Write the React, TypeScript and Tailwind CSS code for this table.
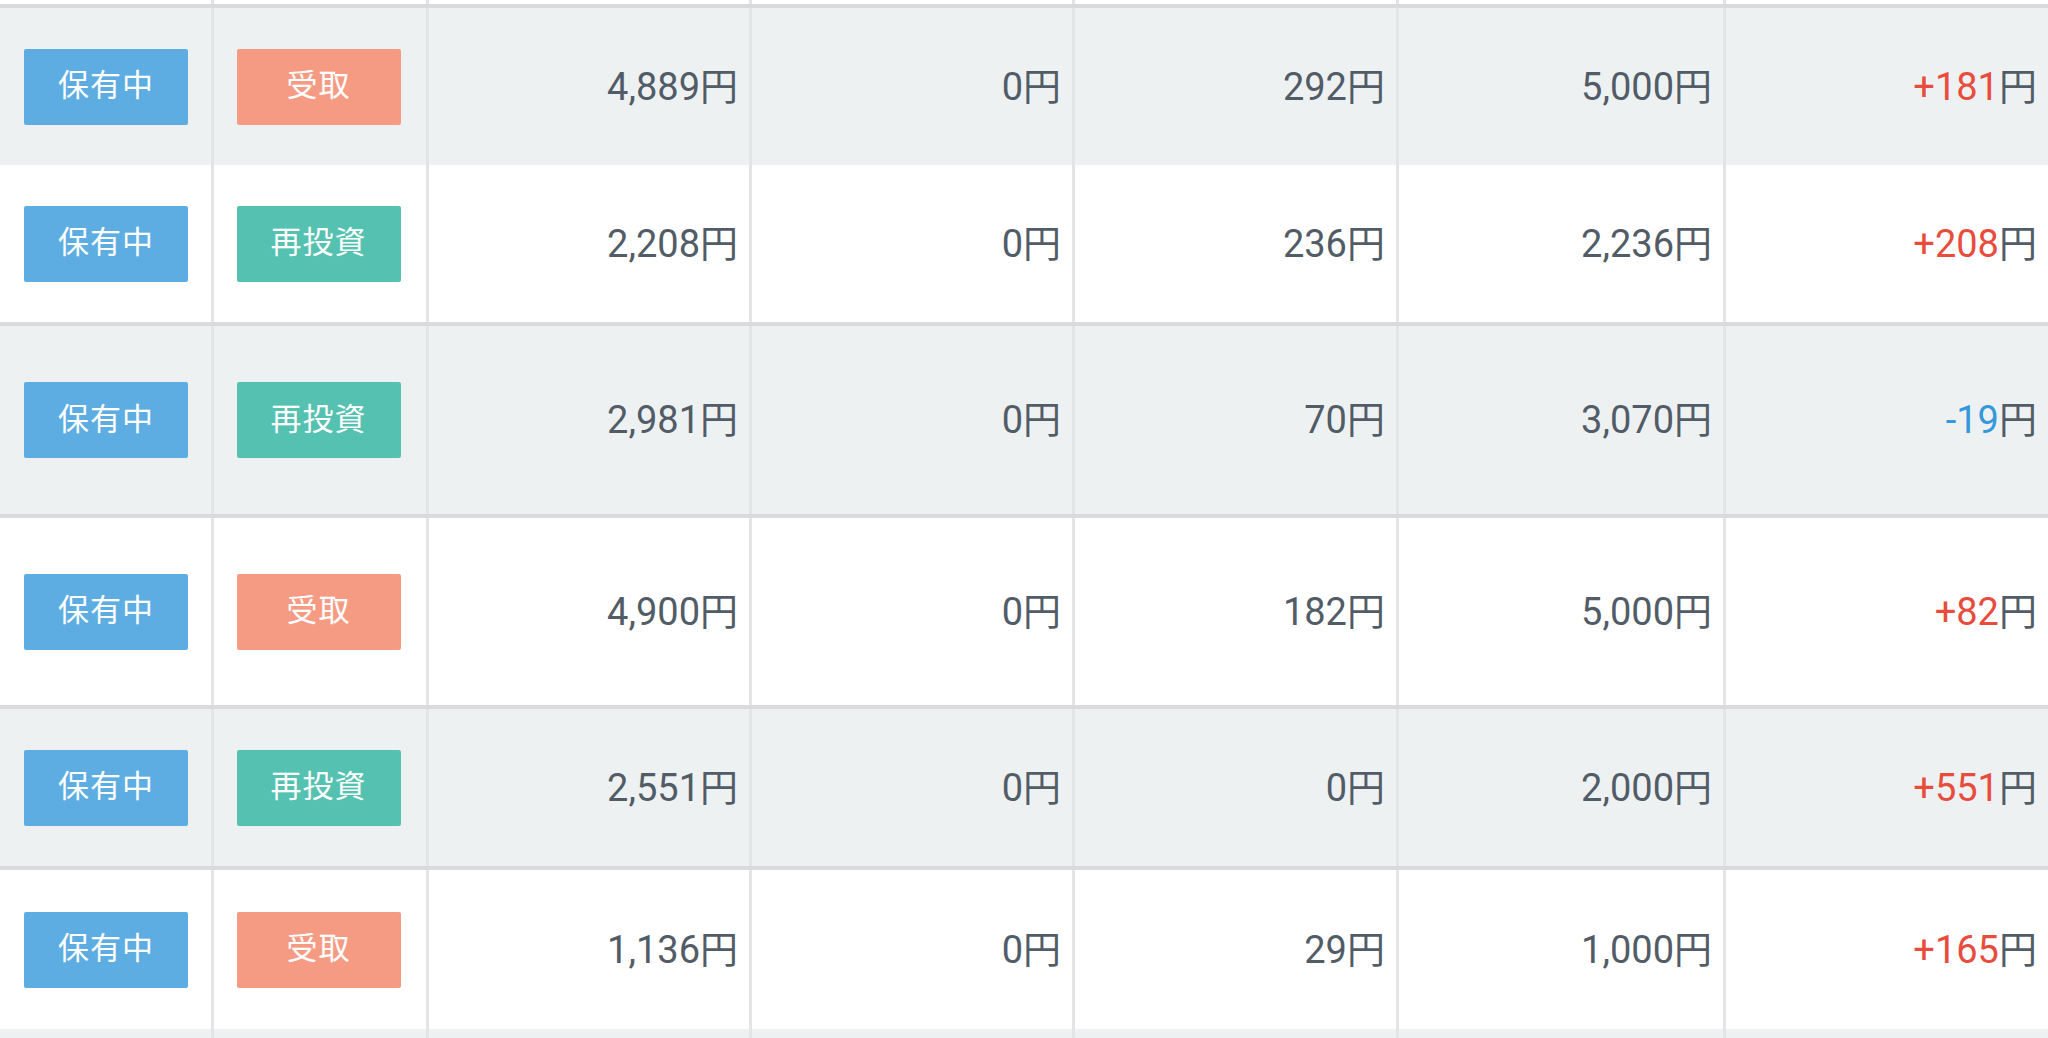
import React from 'react';

type Row = {
  action: 'receive' | 'reinvest';
  values: string[];
  profit: string;
  grey: boolean;
  border: boolean;
  height: string;
};

const rows: Row[] = [
  { action: 'receive', values: ['4,889', '0', '292', '5,000'], profit: '+181', grey: true, border: true, height: 'h-[157px]' },
  { action: 'reinvest', values: ['2,208', '0', '236', '2,236'], profit: '+208', grey: false, border: false, height: 'h-[157px]' },
  { action: 'reinvest', values: ['2,981', '0', '70', '3,070'], profit: '-19', grey: true, border: true, height: 'h-[188px]' },
  { action: 'receive', values: ['4,900', '0', '182', '5,000'], profit: '+82', grey: false, border: true, height: 'h-[187px]' },
  { action: 'reinvest', values: ['2,551', '0', '0', '2,000'], profit: '+551', grey: true, border: true, height: 'h-[157px]' },
  { action: 'receive', values: ['1,136', '0', '29', '1,000'], profit: '+165', grey: false, border: true, height: 'h-[159px]' },
];

const gridCols = 'grid grid-cols-[214px_215px_323px_323px_324px_327px_1fr]';
const cell = 'border-r-[3px] border-[#e2e4e5] h-full';

function Badge({ label, color }: { label: string; color: string }) {
  return (
    <div className={`w-[164px] h-[76px] rounded-[2px] flex items-center justify-center text-white text-[31px] tracking-[1px] ${color}`}>
      {label}
    </div>
  );
}

function Amount({ value, profit }: { value: string; profit?: boolean }) {
  const numColor = !profit ? 'text-[#525c67]' : value.startsWith('-') ? 'text-[#3498db]' : 'text-[#e74c3c]';
  return (
    <div className="h-full flex items-center justify-end pr-[11px] text-[38px] leading-none">
      <span className={numColor}>{value}</span>
      <span className="text-[#525c67]">円</span>
    </div>
  );
}

function TableRow({ row }: { row: Row }) {
  return (
    <div
      className={`${gridCols} ${row.height} ${row.grey ? 'bg-[#eef1f2]' : 'bg-white'} ${
        row.border ? 'border-t-4 border-[#d9dadb] box-content' : ''
      }`}
    >
      <div className={`${cell} flex items-center justify-center pl-[1px]`}>
        <Badge label="保有中" color="bg-[#5dade2]" />
      </div>
      <div className={`${cell} flex items-center justify-center pr-[3px]`}>
        {row.action === 'receive' ? (
          <Badge label="受取" color="bg-[#f59b84]" />
        ) : (
          <Badge label="再投資" color="bg-[#55c1b0]" />
        )}
      </div>
      {row.values.map((v, i) => (
        <div key={i} className={cell}>
          <Amount value={v} />
        </div>
      ))}
      <div className="h-full">
        <Amount value={row.profit} profit />
      </div>
    </div>
  );
}

export default function App() {
  return (
    <div
      className="w-[2048px] h-[1038px] overflow-hidden bg-white"
      style={{ fontFamily: 'Roboto, "Noto Sans CJK JP", sans-serif' }}
    >
      <div className={`${gridCols} h-[4px]`}>
        {[0, 1, 2, 3, 4, 5].map((i) => (
          <div key={i} className={cell} />
        ))}
        <div />
      </div>
      {rows.map((row, i) => (
        <TableRow key={i} row={row} />
      ))}
      <div className={`${gridCols} h-[40px] bg-[#eef1f2]`}>
        {[0, 1, 2, 3, 4, 5].map((i) => (
          <div key={i} className={cell} />
        ))}
        <div />
      </div>
    </div>
  );
}
